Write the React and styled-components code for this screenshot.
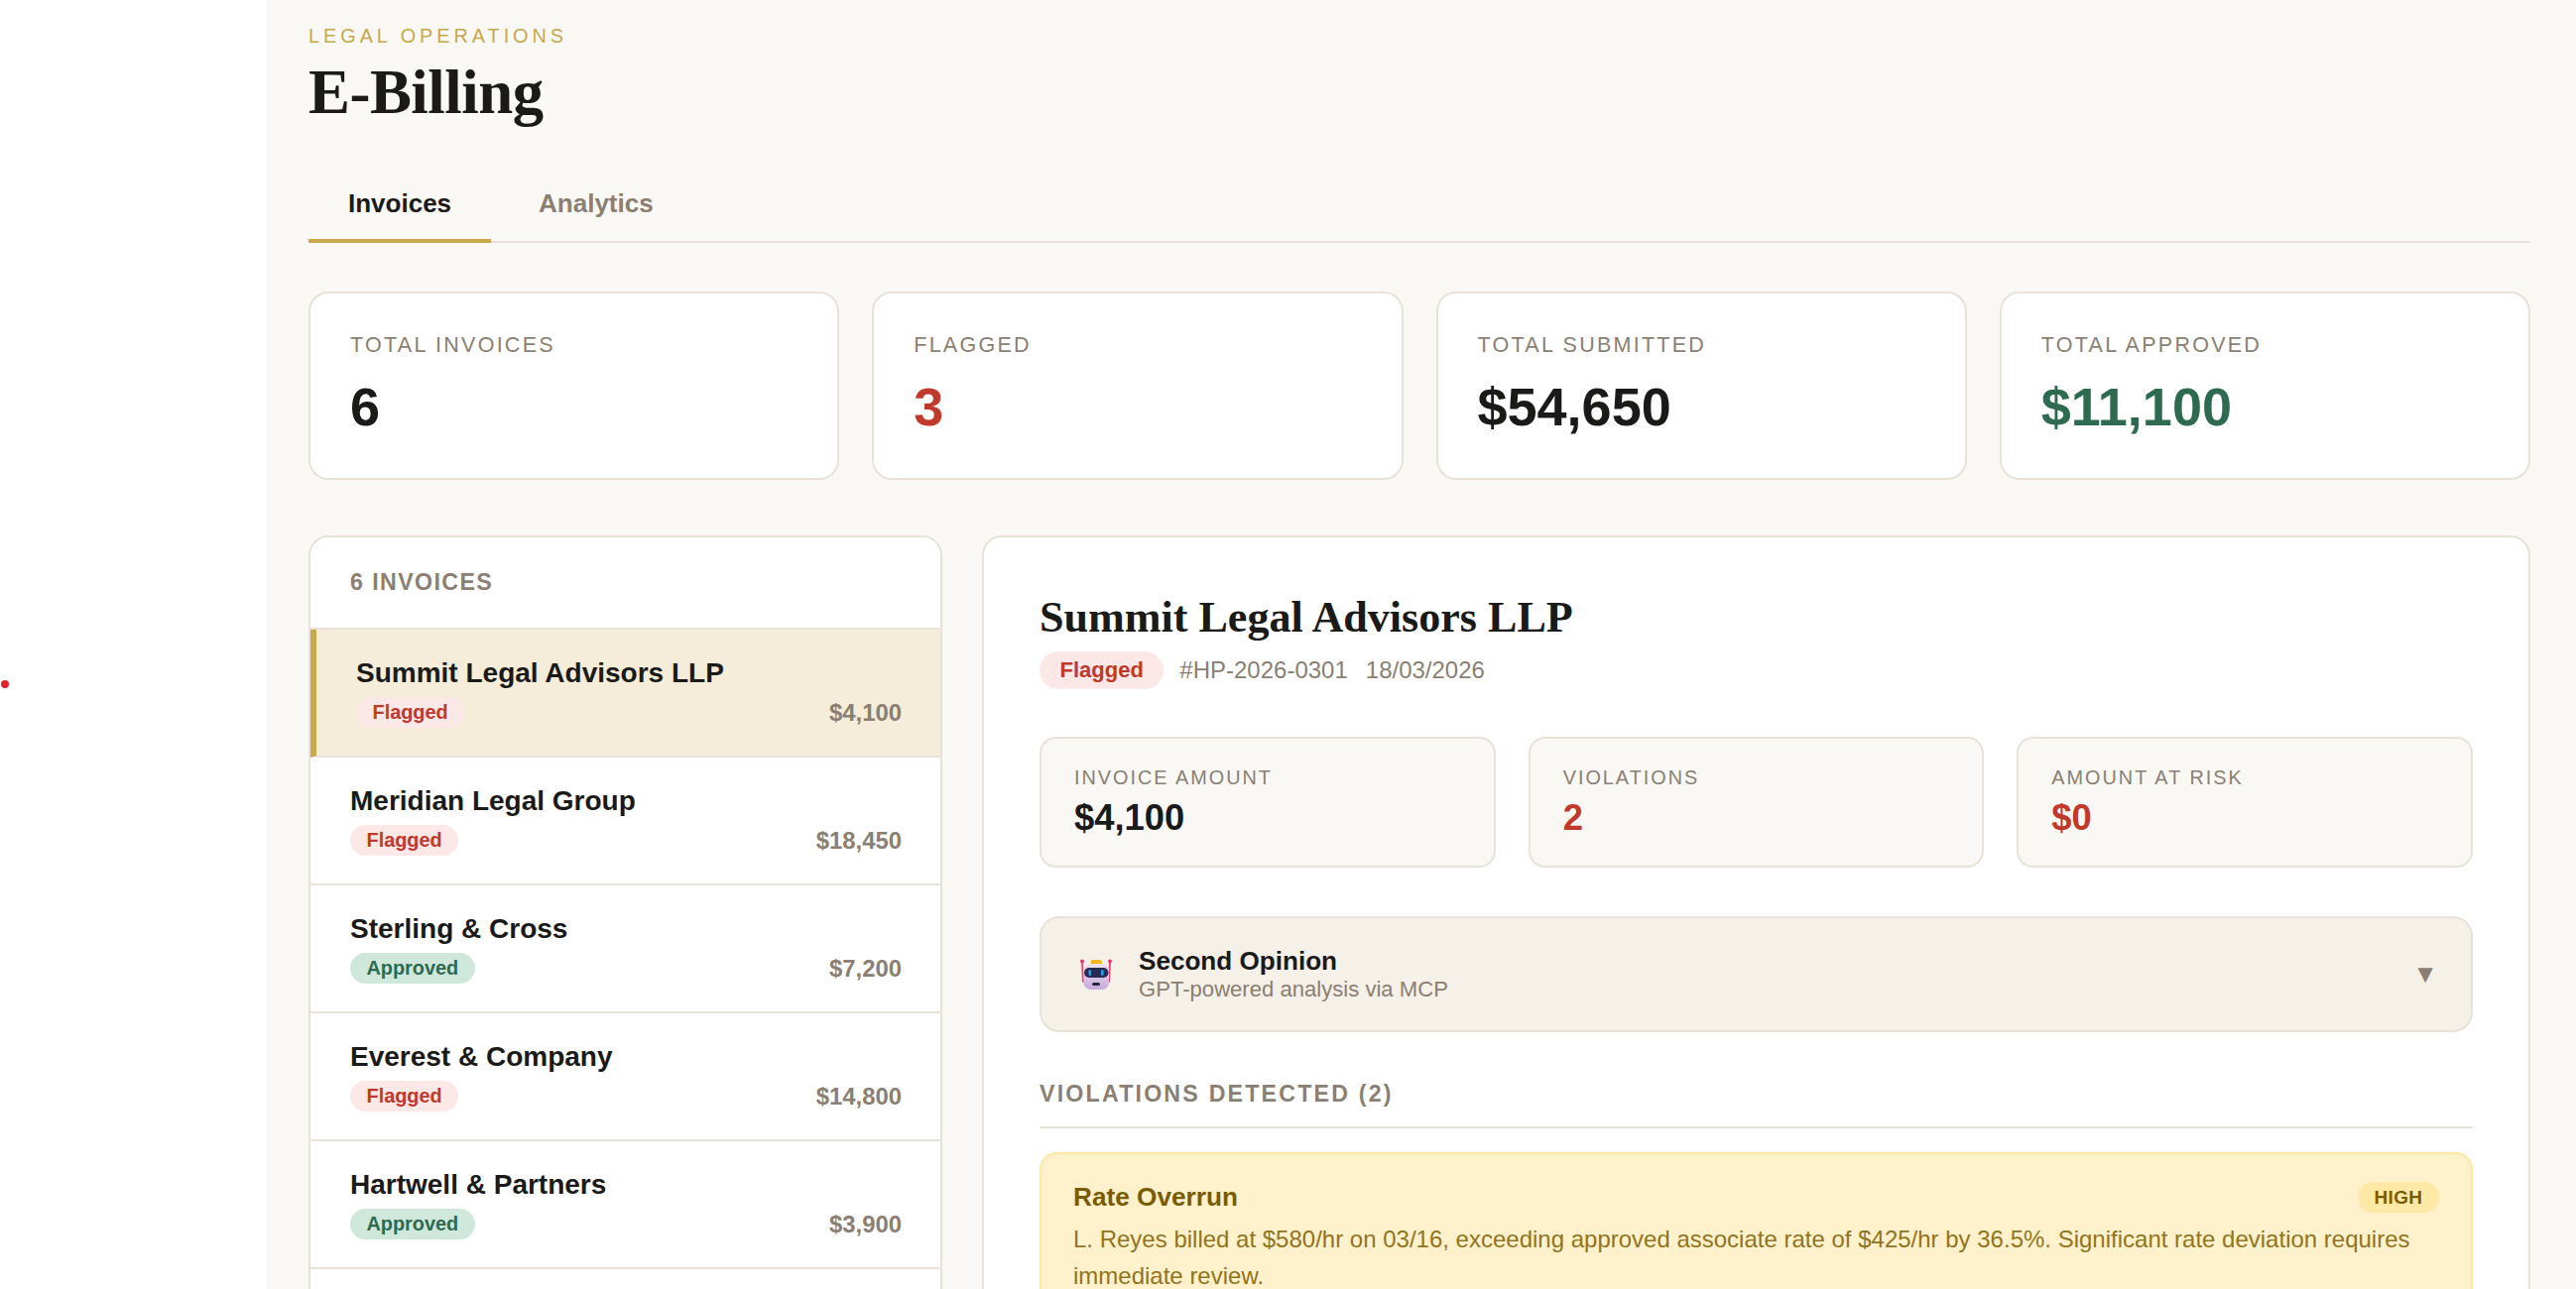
import React from 'react';
import styled, { createGlobalStyle } from 'styled-components';

const GlobalStyle = createGlobalStyle`
  * { box-sizing: border-box; }
  html, body { margin: 0; height: 100%; overflow: hidden; background: #fff; }
  body { font-family: "Liberation Sans", Arial, sans-serif; color: #1a1a18; }
  #root { height: 100%; }
`
const toneColor = { red: '#c0392b', green: '#2d6a4f', dark: '#1a1a18' }

const Shell = styled.div`
  display: flex;
  height: 100vh;
  overflow: hidden;
`
const Sidebar = styled.aside`
  position: relative;
  flex: 0 0 269px;
  background: #fff;
`
const RedDot = styled.span`
  position: absolute;
  left: 1px;
  top: 686px;
  width: 8px;
  height: 8px;
  border-radius: 50%;
  background: #e3202a;
`
const Main = styled.main`
  flex: 1;
  min-width: 0;
  padding: 21px 46px 0 42px;
  background: #faf8f5;
`
const Eyebrow = styled.div`
  font-size: 19.87px;
  line-height: 30px;
  letter-spacing: 3.97px;
  color: #c9a84c;
`
const PageTitle = styled.h1`
  margin: 4.5px 0 0;
  font-family: "Liberation Serif", "Times New Roman", serif;
  font-size: 62.9px;
  line-height: 75.5px;
  font-weight: 700;
  letter-spacing: -0.5px;
`
const Tabs = styled.nav`
  display: flex;
  gap: 8px;
  margin-top: 33.5px;
  border-bottom: 2px solid #e8e2d9;
`
const Tab = styled.div`
  margin-bottom: -2px;
  padding: 21px 40px 17.5px;
  border-bottom: 4px solid ${p => (p.$active ? '#c9a84c' : 'transparent')};
  font-size: 26px;
  line-height: 38px;
  font-weight: 700;
  color: ${p => (p.$active ? '#1a1a18' : '#8a7f72')};
`
const StatRow = styled.section`
  display: grid;
  grid-template-columns: repeat(4, 1fr);
  gap: 33px;
  margin-top: 48.5px;
`
const StatCard = styled.div`
  height: 190px;
  padding: 40px;
  background: #fff;
  border: 2px solid #e8e2d9;
  border-radius: 20px;
`
const StatLabel = styled.div`
  font-size: 21.53px;
  line-height: 25px;
  letter-spacing: 2.25px;
  color: #8a7f72;
`
const StatValue = styled.div`
  margin-top: 18px;
  font-size: 54px;
  line-height: 63px;
  font-weight: 700;
  color: ${p => toneColor[p.$tone || 'dark']};
`
const Columns = styled.section`
  display: flex;
  gap: 40px;
  margin-top: 56.5px;
  align-items: stretch;
`
const ListPanel = styled.div`
  flex: 0 0 639px;
  background: #fff;
  border: 2px solid #e8e2d9;
  border-radius: 20px;
  overflow: hidden;
`
const ListHeader = styled.div`
  padding: 33px 40px;
  border-bottom: 2px solid #e8e2d9;
  font-size: 23.2px;
  line-height: 25px;
  font-weight: 700;
  letter-spacing: 1.4px;
  color: #8a7f72;
`
const Row = styled.div`
  padding: 23px 39px 28px 40px;
  border-bottom: 2px solid #e8e2d9;
  border-left: ${p => (p.$active ? '6px solid #c9a84c' : '0')};
  background: ${p => (p.$active ? '#f5ecd9' : '#fff')};
`
const RowName = styled.div`
  font-size: 28px;
  line-height: 42px;
  font-weight: 700;
`
const RowMeta = styled.div`
  display: flex;
  justify-content: space-between;
  align-items: center;
  margin-top: 3px;
`
const Amount = styled.span`
  font-size: 23.9px;
  font-weight: 700;
  color: #8a7f72;
`
const Badge = styled.span`
  display: inline-flex;
  align-items: center;
  height: ${p => (p.$large ? '38px' : '31px')};
  padding: 0 ${p => (p.$large ? '20.5px' : '16.5px')};
  border-radius: 20px;
  font-size: ${p => (p.$large ? '22px' : '19.87px')};
  font-weight: 700;
  color: ${p => (p.$status === 'Flagged' ? '#c0392b' : '#2d6a4f')};
  background: ${p => (p.$status === 'Flagged' ? '#fce8e6' : '#d0e8dc')};
`
const DetailPanel = styled.div`
  flex: 1;
  min-width: 0;
  padding: 55px 56px 60px;
  background: #fff;
  border: 2px solid #e8e2d9;
  border-radius: 20px;
`
const DetailTitle = styled.h2`
  margin: 0;
  font-family: "Liberation Serif", "Times New Roman", serif;
  font-size: 44.1px;
  line-height: 52.4px;
  font-weight: 700;
`
const DetailMeta = styled.div`
  display: flex;
  align-items: center;
  margin-top: 7.5px;
  font-size: 24px;
  color: #8a7f72;
`
const MetaRef = styled.span`
  margin-left: 16px;
  margin-right: 18px;
`
const MiniGrid = styled.div`
  display: grid;
  grid-template-columns: repeat(3, 1fr);
  gap: 33px;
  margin-top: 48px;
`
const MiniCard = styled.div`
  height: 132px;
  padding: 28px 33px;
  background: #faf8f5;
  border: 2px solid #e8e2d9;
  border-radius: 16.5px;
`
const MiniLabel = styled.div`
  font-size: 19.87px;
  line-height: 23px;
  letter-spacing: 1.99px;
  color: #8a7f72;
`
const MiniValue = styled.div`
  margin-top: 7px;
  font-size: 36.4px;
  line-height: 43.7px;
  font-weight: 700;
  color: ${p => toneColor[p.$tone || 'dark']};
`
const Opinion = styled.div`
  display: flex;
  align-items: center;
  gap: 27px;
  margin-top: 49.5px;
  padding: 26.5px 33px 29px 39px;
  background: #f5f0e8;
  border: 2px solid #e8e2d9;
  border-radius: 20px;
`
const RobotSvg = styled.svg`
  flex: none;
  margin-top: 3px;
`
const OpinionText = styled.div`
  flex: 1;
`
const OpinionTitle = styled.div`
  font-size: 26.1px;
  line-height: 32px;
  font-weight: 700;
`
const OpinionSub = styled.div`
  margin-top: 1px;
  font-size: 22.1px;
  line-height: 24px;
  color: #8a7f72;
`
const Caret = styled.span`
  font-size: 26px;
  line-height: 1;
  margin-top: 2px;
  color: #8a7f72;
`
const SectionHead = styled.h3`
  margin: 49.5px 0 24px;
  padding-bottom: 19px;
  border-bottom: 2px solid #e6e3da;
  font-size: 23.2px;
  line-height: 27px;
  font-weight: 700;
  letter-spacing: 2.2px;
  color: #8a7f72;
`
const Alert = styled.div`
  padding: 28px 32px 40px;
  background: #fef1cb;
  border: 2px solid #fde8a6;
  border-radius: 17px;
`
const AlertHead = styled.div`
  display: flex;
  justify-content: space-between;
  align-items: center;
`
const AlertTitle = styled.div`
  font-size: 26.2px;
  font-weight: 700;
  color: #7a5c00;
`
const Severity = styled.span`
  display: inline-flex;
  align-items: center;
  height: 31px;
  padding: 0 16.5px;
  border-radius: 20px;
  font-size: 19px;
  font-weight: 700;
  letter-spacing: 0.4px;
  color: #7a5c00;
  background: #fde8a6;
`
const AlertBody = styled.p`
  margin: 9px 0 0;
  font-size: 24px;
  line-height: 36.2px;
  color: #927420;
`

const RobotIcon = () => (
  <RobotSvg width="32" height="31" viewBox="0 0 32 31" aria-hidden="true">
    <defs>
      <linearGradient id="robotHead" x1="0" y1="0" x2="0" y2="1">
        <stop offset="0" stopColor="#efe3ec" />
        <stop offset="1" stopColor="#c5aadd" />
      </linearGradient>
    </defs>
    <path d="M2 3 L3 23 M30 3 L29 23" stroke="#f0457a" strokeWidth="2" fill="none" strokeLinecap="round" />
    <circle cx="2" cy="2.4" r="1.9" fill="#f0326e" />
    <circle cx="30" cy="2.4" r="1.9" fill="#f0326e" />
    <rect x="10.5" y="1" width="11.5" height="5" rx="2.5" fill="#f5b91f" />
    <rect x="3.5" y="5" width="25.5" height="26" rx="7" fill="url(#robotHead)" />
    <rect x="4" y="9" width="24.5" height="10" rx="5" fill="#2a2a55" />
    <rect x="8.5" y="11" width="2.6" height="6" rx="1.3" fill="#1e9fe8" />
    <rect x="21" y="11" width="2.6" height="6" rx="1.3" fill="#1e9fe8" />
    <rect x="12" y="24" width="8" height="3" rx="1.5" fill="#2a2438" />
  </RobotSvg>
)

const stats = [
  { label: 'TOTAL INVOICES', value: '6' },
  { label: 'FLAGGED', value: '3', tone: 'red' },
  { label: 'TOTAL SUBMITTED', value: '$54,650' },
  { label: 'TOTAL APPROVED', value: '$11,100', tone: 'green' },
]
const invoices = [
  { name: 'Summit Legal Advisors LLP', status: 'Flagged', amount: '$4,100', active: true },
  { name: 'Meridian Legal Group', status: 'Flagged', amount: '$18,450' },
  { name: 'Sterling & Cross', status: 'Approved', amount: '$7,200' },
  { name: 'Everest & Company', status: 'Flagged', amount: '$14,800' },
  { name: 'Hartwell & Partners', status: 'Approved', amount: '$3,900' },
]
const miniStats = [
  { label: 'INVOICE AMOUNT', value: '$4,100' },
  { label: 'VIOLATIONS', value: '2', tone: 'red' },
  { label: 'AMOUNT AT RISK', value: '$0', tone: 'red' },
]

const App = () => {
  return (
    <Shell>
      <GlobalStyle />
      <Sidebar>
        <RedDot />
      </Sidebar>
      <Main>
        <Eyebrow>LEGAL OPERATIONS</Eyebrow>
        <PageTitle>E-Billing</PageTitle>
        <Tabs>
          <Tab $active>Invoices</Tab>
          <Tab>Analytics</Tab>
        </Tabs>
        <StatRow>
          {stats.map(s => (
            <StatCard key={s.label}>
              <StatLabel>{s.label}</StatLabel>
              <StatValue $tone={s.tone}>{s.value}</StatValue>
            </StatCard>
          ))}
        </StatRow>
        <Columns>
          <ListPanel>
            <ListHeader>6 INVOICES</ListHeader>
            {invoices.map(inv => (
              <Row key={inv.name} $active={inv.active}>
                <RowName>{inv.name}</RowName>
                <RowMeta>
                  <Badge $status={inv.status}>{inv.status}</Badge>
                  <Amount>{inv.amount}</Amount>
                </RowMeta>
              </Row>
            ))}
          </ListPanel>
          <DetailPanel>
            <DetailTitle>Summit Legal Advisors LLP</DetailTitle>
            <DetailMeta>
              <Badge $status="Flagged" $large>Flagged</Badge>
              <MetaRef>#HP-2026-0301</MetaRef>
              <span>18/03/2026</span>
            </DetailMeta>
            <MiniGrid>
              {miniStats.map(s => (
                <MiniCard key={s.label}>
                  <MiniLabel>{s.label}</MiniLabel>
                  <MiniValue $tone={s.tone}>{s.value}</MiniValue>
                </MiniCard>
              ))}
            </MiniGrid>
            <Opinion>
              <RobotIcon />
              <OpinionText>
                <OpinionTitle>Second Opinion</OpinionTitle>
                <OpinionSub>GPT-powered analysis via MCP</OpinionSub>
              </OpinionText>
              <Caret>▼</Caret>
            </Opinion>
            <SectionHead>VIOLATIONS DETECTED (2)</SectionHead>
            <Alert>
              <AlertHead>
                <AlertTitle>Rate Overrun</AlertTitle>
                <Severity>HIGH</Severity>
              </AlertHead>
              <AlertBody>L. Reyes billed at $580/hr on 03/16, exceeding approved associate rate of $425/hr by 36.5%. Significant rate deviation requires immediate review.</AlertBody>
            </Alert>
          </DetailPanel>
        </Columns>
      </Main>
    </Shell>
  )
}

export default App
